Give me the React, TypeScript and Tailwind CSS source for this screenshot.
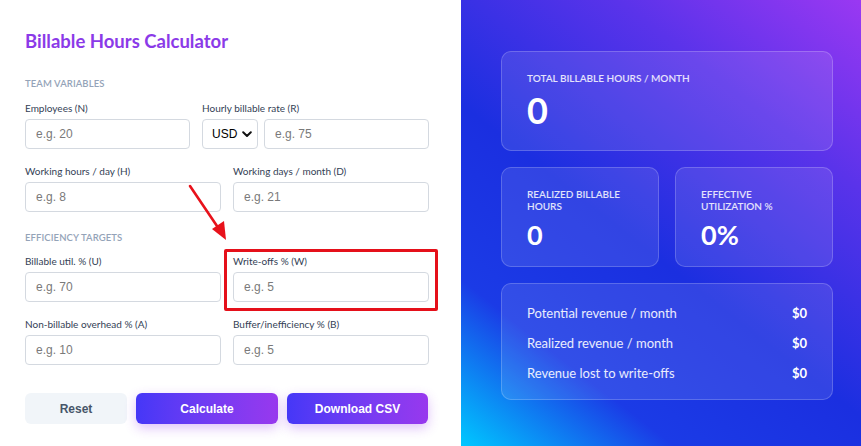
import React from 'react';

const labelCls = "block text-[10px] leading-[12px] text-[#334155] font-['Lato',sans-serif]";
const inputCls =
  "h-[30px] w-full rounded-[4px] border border-[#d4d9e0] bg-white px-[10px] text-[12px] text-[#111] placeholder:text-[#7a7a7a] font-['Liberation_Sans',Arial,sans-serif] outline-none";
const sectionCls = "text-[9.5px] leading-[12px] font-semibold uppercase text-[#94a3b8] font-['Lato',sans-serif] tracking-[0.1px]";
const cardLabel = "text-[10px] leading-[12px] font-semibold uppercase text-white/85";

const Field: React.FC<{ label: string; placeholder: string }> = ({ label, placeholder }) => (
  <div>
    <label className={labelCls}>{label}</label>
    <input className={`${inputCls} mt-[5px]`} placeholder={placeholder} />
  </div>
);

const App: React.FC = () => {
  return (
    <div className="relative flex w-[861px] h-[446px] overflow-hidden bg-white">
      {/* inputs */}
      <div className="w-[461px] shrink-0 bg-white pl-[25px] pr-[32px] pt-[29px] shadow-[1px_0_3px_rgba(0,0,0,0.06)]">
        <h1 className="text-[18.5px] leading-[24px] font-bold text-[#8b3ae8] font-['Lato',sans-serif]">
          Billable Hours Calculator
        </h1>

        <div className={`${sectionCls} mt-[25px]`}>Team variables</div>

        <div className="mt-[12px] flex gap-[12px]">
          <div className="w-[165px] shrink-0">
            <Field label="Employees (N)" placeholder="e.g. 20" />
          </div>
          <div className="flex-1">
            <label className={labelCls}>Hourly billable rate (R)</label>
            <div className="mt-[5px] flex gap-[6px]">
              <div className="flex h-[30px] w-[56px] shrink-0 items-center justify-between rounded-[4px] border border-[#d4d9e0] pl-[9px] pr-[5px] text-[12px] text-black font-['Liberation_Sans',Arial,sans-serif]">
                <span>USD</span>
                <svg width="10" height="7" viewBox="0 0 10 7">
                  <path d="M1.2 1.3 L5 5 L8.8 1.3" fill="none" stroke="#111" strokeWidth="2" strokeLinecap="round" strokeLinejoin="round" />
                </svg>
              </div>
              <input className={inputCls} placeholder="e.g. 75" />
            </div>
          </div>
        </div>

        <div className="mt-[16px] grid grid-cols-2 gap-[12px]">
          <Field label="Working hours / day (H)" placeholder="e.g. 8" />
          <Field label="Working days / month (D)" placeholder="e.g. 21" />
        </div>

        <div className={`${sectionCls} mt-[20px]`}>Efficiency targets</div>

        <div className="mt-[11px] grid grid-cols-2 gap-x-[12px] gap-y-[16px]">
          <Field label="Billable util. % (U)" placeholder="e.g. 70" />
          <Field label="Write-offs % (W)" placeholder="e.g. 5" />
          <Field label="Non-billable overhead % (A)" placeholder="e.g. 10" />
          <Field label="Buffer/inefficiency % (B)" placeholder="e.g. 5" />
        </div>

        <div className="mt-[28px] flex gap-[9px] text-[12px] font-bold font-['Liberation_Sans',Arial,sans-serif]">
          <button className="h-[31px] w-[102px] rounded-[6px] bg-[#f1f5f9] text-[#475569]">Reset</button>
          <button className="h-[31px] w-[142px] rounded-[6px] bg-gradient-to-r from-[#4537f7] to-[#9838ee] text-white shadow-[0_4px_12px_rgba(147,51,234,0.3)]">
            Calculate
          </button>
          <button className="h-[31px] w-[141px] rounded-[6px] bg-gradient-to-r from-[#4537f7] to-[#9838ee] text-white shadow-[0_4px_12px_rgba(147,51,234,0.3)]">
            Download CSV
          </button>
        </div>
      </div>

      {/* results */}
      <div className="flex-1 bg-[linear-gradient(38deg,#00c8ff_0%,#1b3be6_22%,#1b2fe0_45%,#5a33ea_75%,#9a38f2_100%)] pl-[40px] pr-[28px] pt-[51px] font-['Lato',sans-serif] text-white">
        <div className="h-[100px] rounded-[10px] border border-white/20 bg-white/10 px-[25px] pt-[20px]">
          <div className={cardLabel}>Total billable hours / month</div>
          <div className="mt-[6px] text-[36px] leading-[40px] font-bold">0</div>
        </div>

        <div className="mt-[16px] grid grid-cols-2 gap-[16px]">
          <div className="h-[100px] rounded-[10px] border border-white/20 bg-white/10 px-[25px] pt-[20px]">
            <div className={cardLabel}>Realized billable hours</div>
            <div className="mt-[7px] text-[27px] leading-[32px] font-bold">0</div>
          </div>
          <div className="h-[100px] rounded-[10px] border border-white/20 bg-white/10 px-[25px] pt-[20px]">
            <div className={cardLabel}>Effective utilization %</div>
            <div className="mt-[7px] text-[27px] leading-[32px] font-bold">0%</div>
          </div>
        </div>

        <div className="mt-[16px] h-[117px] rounded-[10px] border border-white/20 bg-white/10 px-[25px] pt-[15px]">
          {[
            ['Potential revenue / month', '$0'],
            ['Realized revenue / month', '$0'],
            ['Revenue lost to write-offs', '$0'],
          ].map(([k, v]) => (
            <div key={k} className="flex h-[30px] items-center justify-between text-[13px]">
              <span className="text-white/90">{k}</span>
              <span className="font-bold">{v}</span>
            </div>
          ))}
        </div>
      </div>

      {/* annotation */}
      <svg className="pointer-events-none absolute left-0 top-0" width="861" height="446">
        <line x1="190" y1="186" x2="219" y2="229" stroke="#e8121b" strokeWidth="2.6" strokeLinecap="round" />
        <polygon points="226,240 212,229 224,221" fill="#e8121b" />
      </svg>
      <div className="pointer-events-none absolute left-[224px] top-[249px] h-[62px] w-[214px] rounded-[2px] border-[3px] border-[#e5101a]" />
    </div>
  );
};

export default App;
